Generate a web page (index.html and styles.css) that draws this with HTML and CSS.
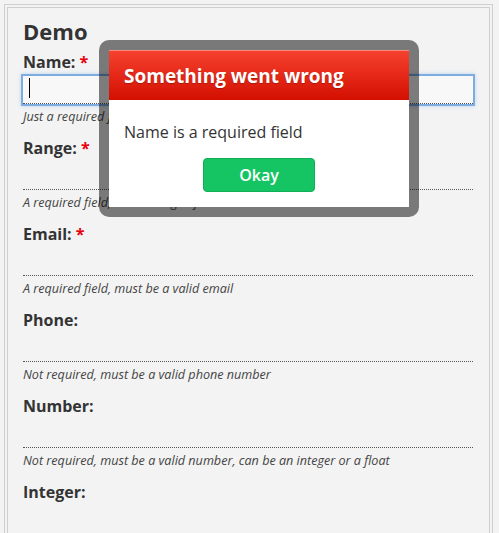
FILE: index.html
```html
<!DOCTYPE html>
<html lang="en">
<head>
    <meta charset="UTF-8">
    <meta name="viewport" content="width=device-width, initial-scale=1.0">
    <title>Form Validation Demo</title>
    <link rel="stylesheet" href="styles.css">
</head>
<body>

<div class="page">
    <h1>Demo</h1>
    <form class="demo-form">
        <div class="field">
            <label for="name">Name: <span class="req">*</span></label>
            <div class="input-wrap">
                <input type="text" id="name" class="focused">
                <span class="caret"></span>
            </div>
            <p class="help">Just a required field</p>
        </div>
        <div class="field">
            <label for="range">Range: <span class="req">*</span></label>
            <input type="text" id="range">
            <p class="help">A required field, with a range of 1-99</p>
        </div>
        <div class="field">
            <label for="email">Email: <span class="req">*</span></label>
            <input type="text" id="email">
            <p class="help">A required field, must be a valid email</p>
        </div>
        <div class="field">
            <label for="phone">Phone:</label>
            <input type="text" id="phone">
            <p class="help">Not required, must be a valid phone number</p>
        </div>
        <div class="field">
            <label for="number">Number:</label>
            <input type="text" id="number">
            <p class="help">Not required, must be a valid number, can be an integer or a float</p>
        </div>
        <div class="field">
            <label for="integer">Integer:</label>
            <input type="text" id="integer">
        </div>
    </form>
</div>

<div class="dialog">
    <div class="dialog-box">
        <div class="dialog-header">Something went wrong</div>
        <div class="dialog-body">
            <p>Name is a required field</p>
            <button type="button" class="btn-okay">Okay</button>
        </div>
    </div>
</div>

</body>
</html>
```

FILE: styles.css
```css
html {
    overflow: hidden;
}
body {
    font-family: "Open Sans", Arial, sans-serif;
    background-color: #f3f3f3;
    margin: 0;
    padding: 4px 6px 0 4px;
    color: #333;
}
.page {
    border: 4px double #cfcfcf;
    border-bottom: none;
    padding: 10px 16px 0 15px;
}
.page h1 {
    font-size: 22px;
    line-height: 26px;
    font-weight: 700;
    margin: 0 0 8px;
    color: #333;
}
.field {
    margin-bottom: 12px;
}
.field label {
    display: block;
    font-size: 16px;
    line-height: 20px;
    font-weight: 700;
    color: #333;
}
.field .req {
    color: #e8000b;
}
.field input {
    display: block;
    box-sizing: border-box;
    width: 100%;
    height: 28px;
    margin-top: 4px;
    padding: 0 5px;
    border: none;
    border-bottom: 1px dotted #555;
    background: transparent;
    font-family: inherit;
    font-size: 15px;
    outline: none;
}
.field input.focused {
    background: rgba(255, 255, 255, 0.4);
    box-shadow: 0 0 0 2px rgba(105, 160, 222, 0.8), 0 0 4px 2px rgba(82, 150, 230, 0.35);
}
.input-wrap {
    position: relative;
}
.caret {
    position: absolute;
    left: 6px;
    top: 2px;
    width: 1px;
    height: 20px;
    background: #000;
}
.help {
    margin: 4px 0 0;
    font-size: 12.6px;
    line-height: 18px;
    font-style: italic;
    color: #444;
}

.dialog {
    position: absolute;
    left: 99px;
    top: 40px;
    padding: 10px;
    background: rgba(0, 0, 0, 0.5);
    border-radius: 10px;
}
.dialog-box {
    width: 300px;
    background: #fff;
}
.dialog-header {
    height: 50px;
    box-sizing: border-box;
    padding: 0 15px;
    line-height: 50px;
    background: linear-gradient(#f6412f, #d30f00);
    border-top: 1px solid #f98a80;
    color: #fff;
    font-size: 19px;
    font-weight: 700;
    text-shadow: 0 1px 1px rgba(0, 0, 0, 0.25);
}
.dialog-body {
    padding: 22px 15px 15px;
    text-align: center;
}
.dialog-body p {
    margin: 0 0 16px;
    font-size: 16px;
    line-height: 20px;
    text-align: left;
    color: #333;
}
.btn-okay {
    width: 112px;
    height: 34px;
    background-color: #15c463;
    border: 1px solid #10ae56;
    border-radius: 4px;
    color: #fff;
    font-family: inherit;
    font-size: 16px;
    font-weight: 600;
    cursor: pointer;
}
```
